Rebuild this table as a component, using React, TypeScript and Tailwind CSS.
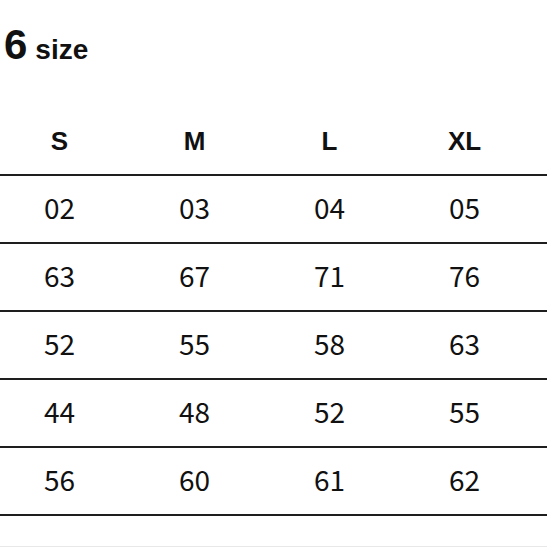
import React from "react";

const header = ["S", "M", "L", "XL"];
const rows = [
  ["02", "03", "04", "05"],
  ["63", "67", "71", "76"],
  ["52", "55", "58", "63"],
  ["44", "48", "52", "55"],
  ["56", "60", "61", "62"],
];

export default function App() {
  return (
    <div className="w-[547px] h-[547px] bg-white overflow-hidden flex flex-col text-[#111]" style={{ fontFamily: '"Liberation Sans", Arial, sans-serif' }}>
      <div className="flex items-baseline pt-[23px] pl-[4px] h-[66px] leading-[44px]">
        <span className="text-[42px] font-bold">6</span>
        <span className="text-[28px] font-bold ml-[8px]">size</span>
      </div>
      <div className="h-[110px] border-b-2 border-[#1e1e1e]">
        <div className="ml-[-8px] w-[540px] grid grid-cols-4 pt-[62px] leading-[26px]">
          {header.map((h) => (
            <div key={h} className="text-center text-[26px] font-bold">{h}</div>
          ))}
        </div>
      </div>
      {rows.map((r, i) => (
        <div key={i} className="h-[68px] border-b-2 border-[#1e1e1e] flex items-center">
          <div className="ml-[-8px] w-[540px] grid grid-cols-4 mb-[4px]">
            {r.map((v, j) => (
              <div key={j} className="text-center text-[28px] leading-[32px]" style={{ fontFamily: '"Noto Sans CJK JP", "Liberation Sans", sans-serif' }}>{v}</div>
            ))}
          </div>
        </div>
      ))}
      <div className="flex-1 border-b border-[#e8e8e8]" />
    </div>
  );
}
